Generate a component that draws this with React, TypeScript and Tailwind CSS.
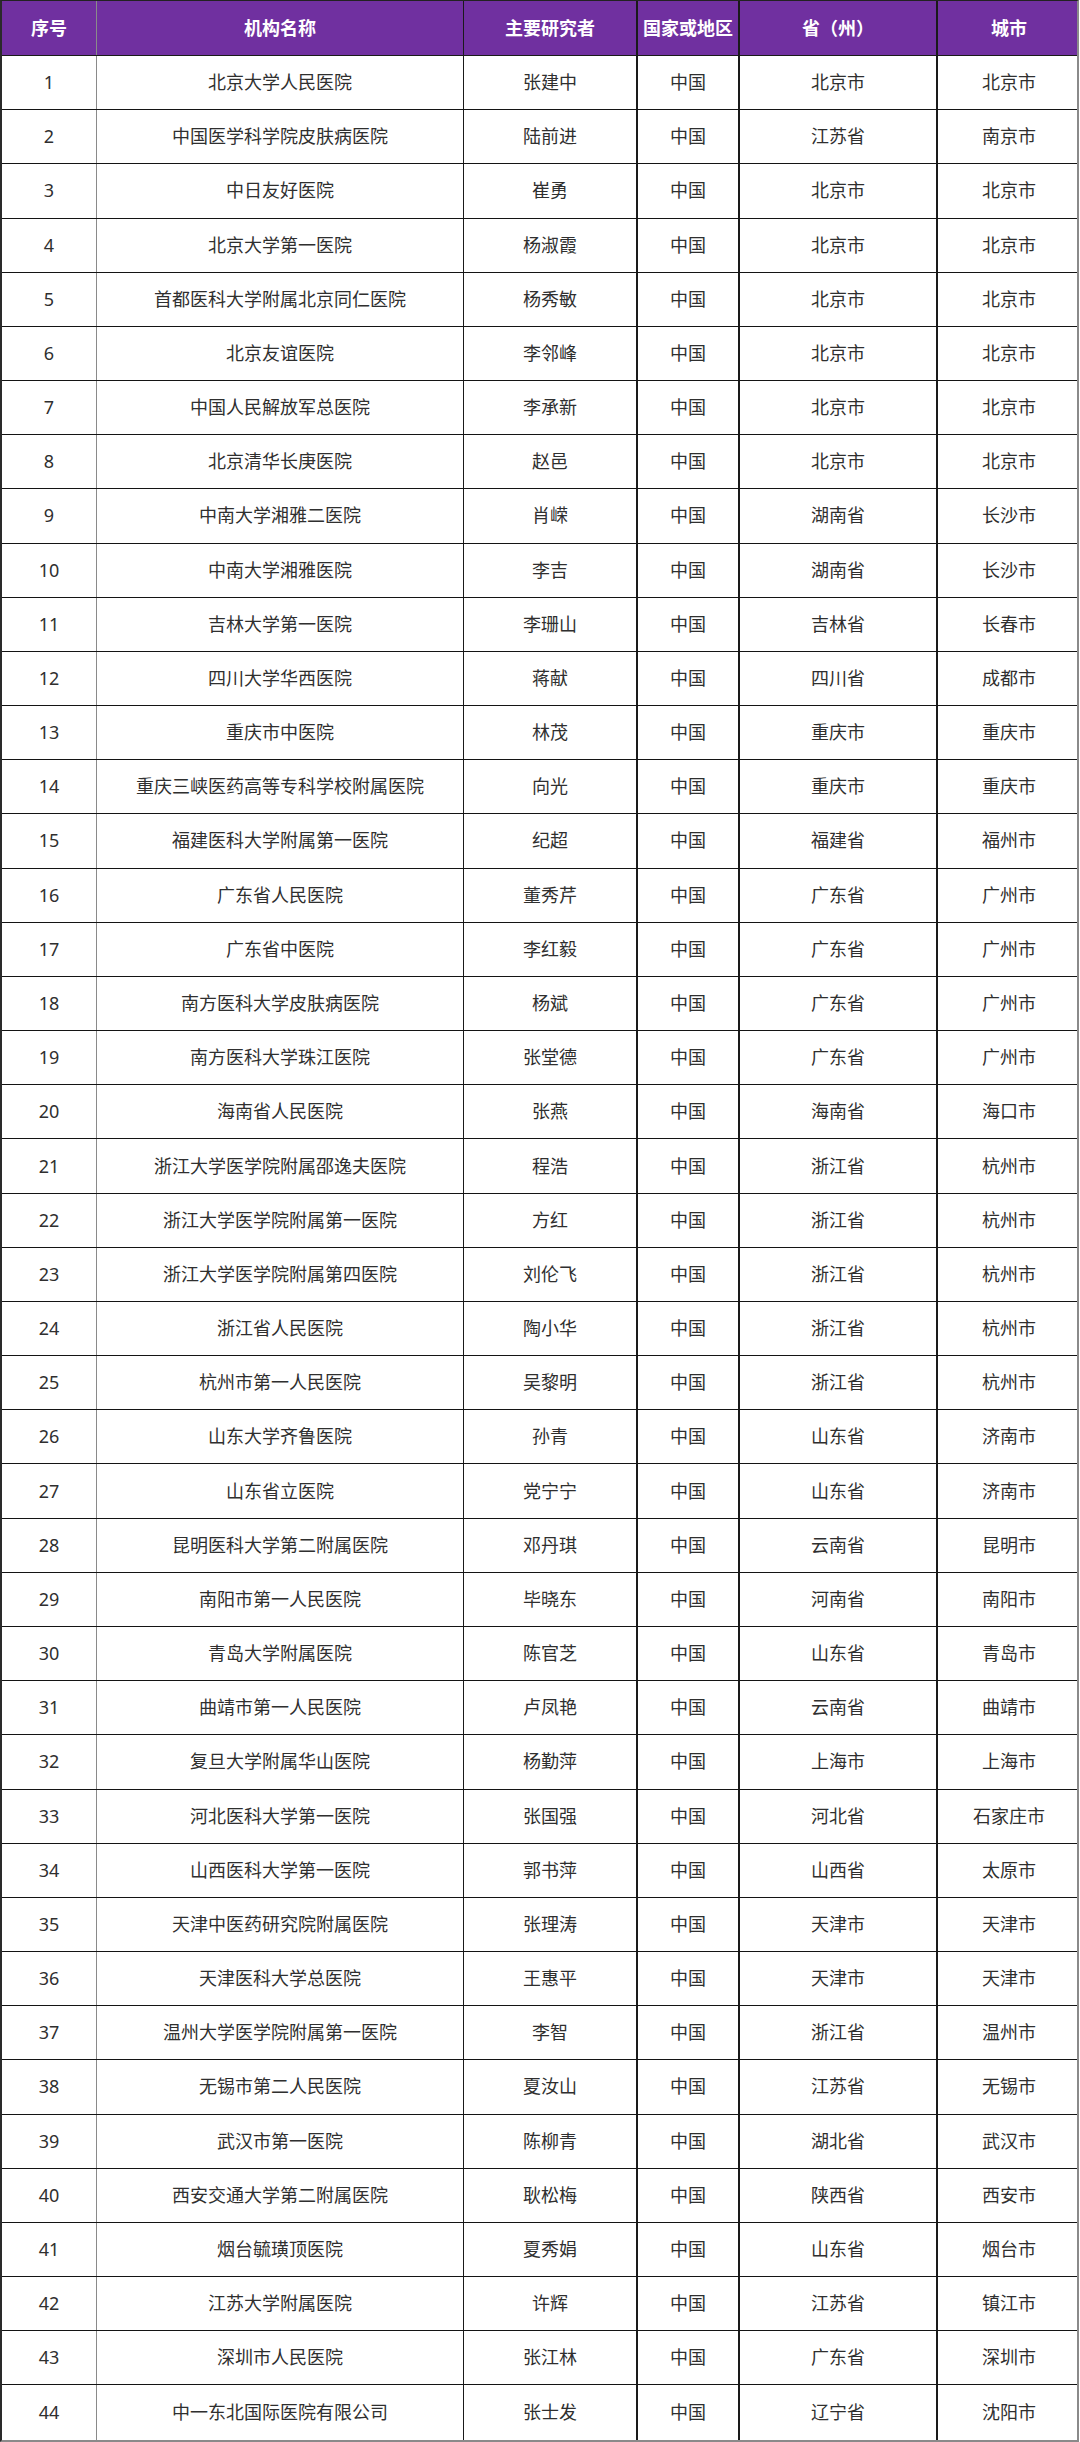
import React from 'react';

const rows: [string, string, string, string, string][] = [
  ['北京大学人民医院', '张建中', '中国', '北京市', '北京市'],
  ['中国医学科学院皮肤病医院', '陆前进', '中国', '江苏省', '南京市'],
  ['中日友好医院', '崔勇', '中国', '北京市', '北京市'],
  ['北京大学第一医院', '杨淑霞', '中国', '北京市', '北京市'],
  ['首都医科大学附属北京同仁医院', '杨秀敏', '中国', '北京市', '北京市'],
  ['北京友谊医院', '李邻峰', '中国', '北京市', '北京市'],
  ['中国人民解放军总医院', '李承新', '中国', '北京市', '北京市'],
  ['北京清华长庚医院', '赵邑', '中国', '北京市', '北京市'],
  ['中南大学湘雅二医院', '肖嵘', '中国', '湖南省', '长沙市'],
  ['中南大学湘雅医院', '李吉', '中国', '湖南省', '长沙市'],
  ['吉林大学第一医院', '李珊山', '中国', '吉林省', '长春市'],
  ['四川大学华西医院', '蒋献', '中国', '四川省', '成都市'],
  ['重庆市中医院', '林茂', '中国', '重庆市', '重庆市'],
  ['重庆三峡医药高等专科学校附属医院', '向光', '中国', '重庆市', '重庆市'],
  ['福建医科大学附属第一医院', '纪超', '中国', '福建省', '福州市'],
  ['广东省人民医院', '董秀芹', '中国', '广东省', '广州市'],
  ['广东省中医院', '李红毅', '中国', '广东省', '广州市'],
  ['南方医科大学皮肤病医院', '杨斌', '中国', '广东省', '广州市'],
  ['南方医科大学珠江医院', '张堂德', '中国', '广东省', '广州市'],
  ['海南省人民医院', '张燕', '中国', '海南省', '海口市'],
  ['浙江大学医学院附属邵逸夫医院', '程浩', '中国', '浙江省', '杭州市'],
  ['浙江大学医学院附属第一医院', '方红', '中国', '浙江省', '杭州市'],
  ['浙江大学医学院附属第四医院', '刘伦飞', '中国', '浙江省', '杭州市'],
  ['浙江省人民医院', '陶小华', '中国', '浙江省', '杭州市'],
  ['杭州市第一人民医院', '吴黎明', '中国', '浙江省', '杭州市'],
  ['山东大学齐鲁医院', '孙青', '中国', '山东省', '济南市'],
  ['山东省立医院', '党宁宁', '中国', '山东省', '济南市'],
  ['昆明医科大学第二附属医院', '邓丹琪', '中国', '云南省', '昆明市'],
  ['南阳市第一人民医院', '毕晓东', '中国', '河南省', '南阳市'],
  ['青岛大学附属医院', '陈官芝', '中国', '山东省', '青岛市'],
  ['曲靖市第一人民医院', '卢凤艳', '中国', '云南省', '曲靖市'],
  ['复旦大学附属华山医院', '杨勤萍', '中国', '上海市', '上海市'],
  ['河北医科大学第一医院', '张国强', '中国', '河北省', '石家庄市'],
  ['山西医科大学第一医院', '郭书萍', '中国', '山西省', '太原市'],
  ['天津中医药研究院附属医院', '张理涛', '中国', '天津市', '天津市'],
  ['天津医科大学总医院', '王惠平', '中国', '天津市', '天津市'],
  ['温州大学医学院附属第一医院', '李智', '中国', '浙江省', '温州市'],
  ['无锡市第二人民医院', '夏汝山', '中国', '江苏省', '无锡市'],
  ['武汉市第一医院', '陈柳青', '中国', '湖北省', '武汉市'],
  ['西安交通大学第二附属医院', '耿松梅', '中国', '陕西省', '西安市'],
  ['烟台毓璜顶医院', '夏秀娟', '中国', '山东省', '烟台市'],
  ['江苏大学附属医院', '许辉', '中国', '江苏省', '镇江市'],
  ['深圳市人民医院', '张江林', '中国', '广东省', '深圳市'],
  ['中一东北国际医院有限公司', '张士发', '中国', '辽宁省', '沈阳市'],
];

const headers = ['序号', '机构名称', '主要研究者', '国家或地区', '省（州）', '城市'];

const gridCols = 'grid grid-cols-[95px_367px_174px_102px_198px_142px]';
const cellBorders = [
  'border-r border-r-[#8a8a8a]',
  'border-r border-r-[#1a1a1a]',
  'border-r-2 border-r-[#1a1a1a]',
  'border-r-2 border-r-[#1a1a1a]',
  'border-r-2 border-r-[#1a1a1a]',
  '',
];

export default function App() {
  return (
    <div
      className="w-[1080px] bg-white"
      style={{ fontFamily: '"Noto Sans", "Noto Sans CJK SC", sans-serif' }}
    >
      <div className="w-[1079px] border-l-2 border-l-[#2a2a2a] border-r-2 border-r-[#8a8a8a] border-t border-t-[#222] border-b-2 border-b-[#8a8a8a]">
        <div className={`${gridCols} h-[55px] bg-[#7030a0] border-b border-b-[#1a1a1a]`}>
          {headers.map((h, i) => (
            <div
              key={h}
              className={`flex items-center justify-center text-[18px] font-bold text-white ${cellBorders[i]}`}
            >
              {h}
            </div>
          ))}
        </div>
        {rows.map((r, idx) => (
          <div
            key={idx}
            className={`${gridCols} h-[54.18px] ${idx < rows.length - 1 ? 'border-b border-b-[#141414]' : ''}`}
          >
            {[String(idx + 1), ...r].map((c, i) => (
              <div
                key={i}
                className={`flex items-center justify-center text-[18px] text-[#2f2f2f] ${cellBorders[i]}`}
              >
                {c}
              </div>
            ))}
          </div>
        ))}
      </div>
    </div>
  );
}
